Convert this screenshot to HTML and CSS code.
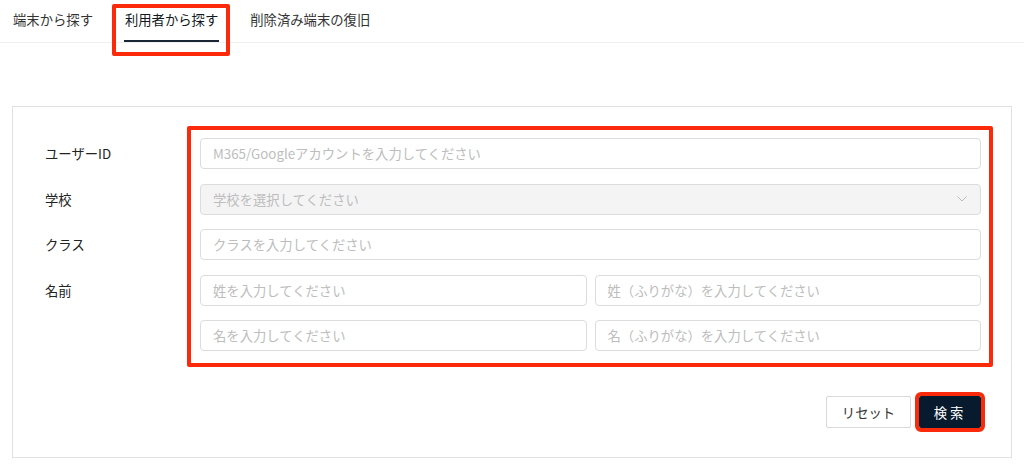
FILE: index.html
```html
<!DOCTYPE html>
<html lang="ja">
<head>
<meta charset="utf-8">
<title>利用者から探す</title>
<link rel="stylesheet" href="styles.css">
</head>
<body>
<nav class="tabs">
  <div class="tab">端末から探す</div>
  <div class="tab active">利用者から探す</div>
  <div class="tab">削除済み端末の復旧</div>
</nav>
<main class="panel">
  <div class="form">
    <div class="labels">
      <div class="label">ユーザーID</div>
      <div class="label">学校</div>
      <div class="label">クラス</div>
      <div class="label">名前</div>
    </div>
    <div class="fields">
      <input class="input" type="text" placeholder="M365/Googleアカウントを入力してください">
      <div class="select">
        <span class="placeholder">学校を選択してください</span>
        <svg class="chevron" width="10" height="6" viewBox="0 0 10 6"><path d="M0.5 0.5 L5 5 L9.5 0.5" fill="none" stroke="#bdbdbd" stroke-width="1"/></svg>
      </div>
      <input class="input" type="text" placeholder="クラスを入力してください">
      <div class="pair">
        <input class="input" type="text" placeholder="姓を入力してください">
        <input class="input" type="text" placeholder="姓（ふりがな）を入力してください">
      </div>
      <div class="pair">
        <input class="input" type="text" placeholder="名を入力してください">
        <input class="input" type="text" placeholder="名（ふりがな）を入力してください">
      </div>
    </div>
  </div>
  <div class="actions">
    <button class="btn btn-reset" type="button">リセット</button>
    <button class="btn btn-search" type="button">検索</button>
  </div>
</main>
</body>
</html>
```
FILE: styles.css
```css
* { box-sizing: border-box; }
html, body { margin: 0; padding: 0; background: #fff; }
body {
  font-family: "Noto Sans CJK JP", "Noto Sans", sans-serif;
  font-size: 13.33px;
  color: #222;
  width: 1024px;
  height: 470px;
  overflow: hidden;
}
.tabs {
  display: flex;
  gap: 32px;
  padding-left: 13px;
  height: 43px;
  border-bottom: 1px solid #efefef;
}
.tab {
  position: relative;
  height: 42px;
  line-height: 40px;
  color: #333;
  font-size: 13.33px;
  white-space: nowrap;
}
.tab.active {
  color: #111822;
  font-weight: 400;
}
.tab.active::before {
  content: "";
  position: absolute;
  left: -1px;
  right: -1px;
  bottom: 0;
  height: 2px;
  background: #1c2736;
}
.tab.active::after {
  content: "";
  position: absolute;
  top: 4px;
  bottom: -14px;
  left: -13px;
  right: -12px;
  border: 4px solid #fa2a0a;
  border-radius: 2px;
}
.panel {
  margin: 63px 0 0 12px;
  width: 1000px;
  height: 352px;
  border: 1px solid #e2e2e2;
  padding: 31px 30px 0 32px;
}
.form {
  display: grid;
  grid-template-columns: 155px 1fr;
}
.labels {
  display: flex;
  flex-direction: column;
  gap: 14.5px;
}
.label {
  height: 31px;
  line-height: 31px;
  color: #222;
}
.fields {
  position: relative;
  display: flex;
  flex-direction: column;
  gap: 14.5px;
}
.fields::after {
  content: "";
  position: absolute;
  top: -12px;
  left: -13px;
  right: -12px;
  bottom: -16px;
  border: 4px solid #fa2a0a;
  border-radius: 2px;
  pointer-events: none;
}
.input, .select {
  height: 31px;
  width: 100%;
  border: 1px solid #dcdcdc;
  border-radius: 4px;
  padding: 0 12px;
  font-family: inherit;
  font-size: 13.33px;
  color: #222;
  background: #fff;
  outline: none;
}
.input::placeholder { color: #bdbdbd; }
.select {
  display: flex;
  align-items: center;
  justify-content: space-between;
  background: #f4f4f4;
  padding-right: 13px;
}
.placeholder { color: #bdbdbd; }
.pair {
  display: grid;
  grid-template-columns: 1fr 1fr;
  gap: 8px;
}
.actions {
  display: flex;
  justify-content: flex-end;
  gap: 8px;
  margin-top: 45px;
}
.btn {
  height: 32px;
  font-family: inherit;
  font-size: 13.33px;
  border-radius: 2px;
  cursor: pointer;
}
.btn-reset {
  width: 85px;
  background: #fff;
  border: 1px solid #d9d9d9;
  color: #333;
}
.btn-search {
  width: 62px;
  background: #071a2e;
  border: none;
  color: #fff;
  letter-spacing: 3px;
  padding-left: 6px;
  outline: 4px solid #fa2a0a;
  outline-offset: 0;
}
```
